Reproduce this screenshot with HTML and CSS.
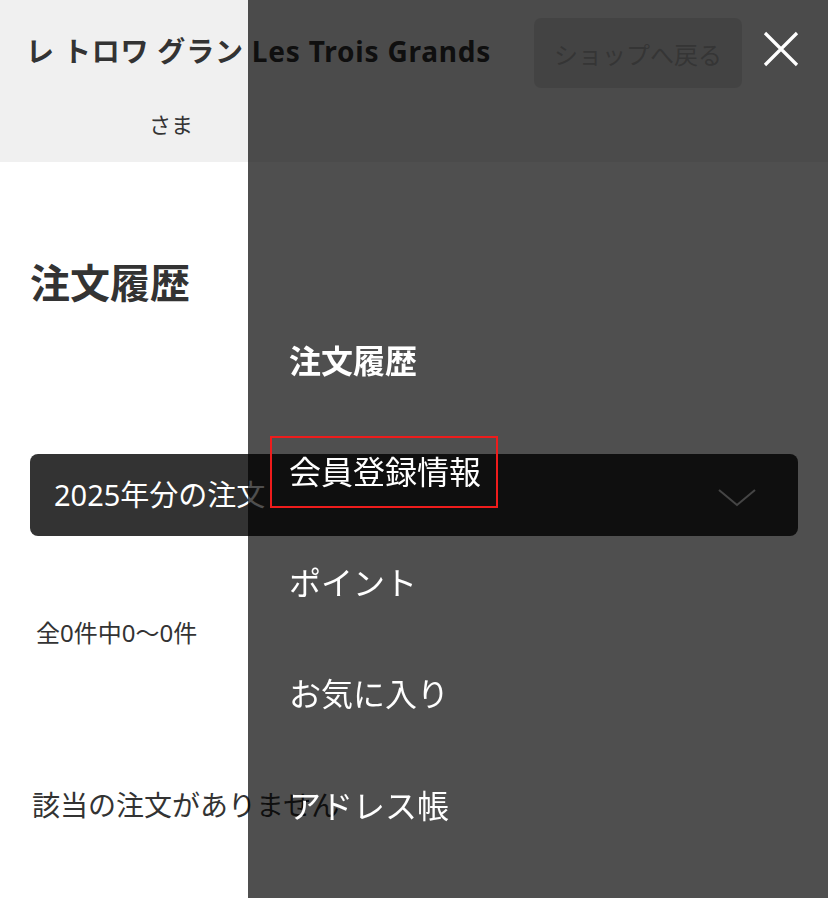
FILE: index.html
```html
<!DOCTYPE html>
<html lang="ja">
<head>
<meta charset="utf-8">
<title>注文履歴</title>
<link rel="stylesheet" href="styles.css">
</head>
<body>
<div class="page">
  <header class="site-header">
    <div class="member">
      <p class="member-name">レ トロワ グラン Les Trois Grands</p>
      <p class="member-suffix">さま</p>
    </div>
    <a class="back-btn" href="#">ショップへ戻る</a>
  </header>
  <main class="content">
    <h1 class="page-title">注文履歴</h1>
    <div class="year-select">
      <span class="year-label">2025年分の注文</span>
      <svg class="chevron" width="38" height="18" viewBox="0 0 38 18"><polyline points="1,1 19,16 37,1" fill="none" stroke="#dddddd" stroke-width="2"/></svg>
    </div>
    <p class="count">全0件中0〜0件</p>
    <p class="empty">該当の注文がありません</p>
  </main>
</div>
<nav class="drawer">
  <button class="drawer-close" type="button" aria-label="閉じる">
    <svg width="36" height="36" viewBox="0 0 36 36"><path d="M2 2 L34 34 M34 2 L2 34" stroke="#ffffff" stroke-width="3.2" fill="none"/></svg>
  </button>
  <ul class="drawer-menu">
    <li><a class="drawer-link is-current" href="#">注文履歴</a></li>
    <li><a class="drawer-link is-marked" href="#">会員登録情報</a></li>
    <li><a class="drawer-link" href="#">ポイント</a></li>
    <li><a class="drawer-link" href="#">お気に入り</a></li>
    <li><a class="drawer-link" href="#">アドレス帳</a></li>
  </ul>
</nav>
</body>
</html>
```

FILE: styles.css
```css
* { box-sizing: border-box; }
html, body { margin: 0; padding: 0; }
body {
  width: 828px;
  height: 898px;
  overflow: hidden;
  background: #ffffff;
  color: #333333;
  font-family: "Noto Sans", "Noto Sans CJK JP", sans-serif;
}
p, h1, ul { margin: 0; padding: 0; }
a { text-decoration: none; }

.site-header {
  height: 162px;
  background: #f0f0f0;
  display: flex;
  justify-content: space-between;
  align-items: flex-start;
  padding: 0 86px 0 26px;
}
.member { padding-top: 31px; }
.member-name {
  font-size: 28px;
  font-weight: 700;
  line-height: 40px;
  letter-spacing: 0.8px;
  color: #333333;
  white-space: nowrap;
}
.member-suffix {
  margin-top: 38px;
  padding-left: 123px;
  font-size: 22px;
  line-height: 30px;
  color: #333333;
}
.back-btn {
  margin-top: 18px;
  width: 208px;
  height: 70px;
  border-radius: 7px;
  background: #d9d9d9;
  color: #ababab;
  font-size: 24px;
  display: flex;
  align-items: center;
  justify-content: center;
}

.content { padding: 0 30px; }
.page-title {
  margin-top: 97px;
  font-size: 40px;
  line-height: 48px;
  font-weight: 700;
  color: #333333;
}
.year-select {
  margin-top: 147px;
  height: 82px;
  border-radius: 8px;
  background: #333333;
  display: flex;
  align-items: center;
  justify-content: space-between;
  padding: 0 42px 0 24px;
}
.year-label {
  color: #ffffff;
  font-size: 29px;
  line-height: 40px;
}
.chevron { display: block; margin-top: 6px; }
.count {
  margin-top: 80px;
  margin-left: 6px;
  font-size: 24px;
  line-height: 34px;
}
.empty {
  margin-top: 135px;
  margin-left: 2px;
  font-size: 28px;
  line-height: 40px;
}

.drawer {
  position: fixed;
  top: 0;
  left: 248px;
  right: 0;
  bottom: 0;
  background: rgba(0, 0, 0, 0.69);
}
.drawer-close {
  position: absolute;
  top: 31px;
  right: 29px;
  padding: 0;
  border: 0;
  background: none;
  line-height: 0;
}
.drawer-menu {
  list-style: none;
  padding: 305px 0 0 22px;
}
.drawer-menu li {
  height: 111.25px;
  display: flex;
  align-items: center;
}
.drawer-link {
  display: inline-block;
  height: 72px;
  line-height: 68px;
  padding: 0 15px 0 17px;
  border: 2px solid transparent;
  color: #ffffff;
  font-size: 32px;
}
.drawer-link.is-current { font-weight: 700; font-size: 32px; }
.drawer-link.is-marked { border-color: #ee1c1c; }
```
